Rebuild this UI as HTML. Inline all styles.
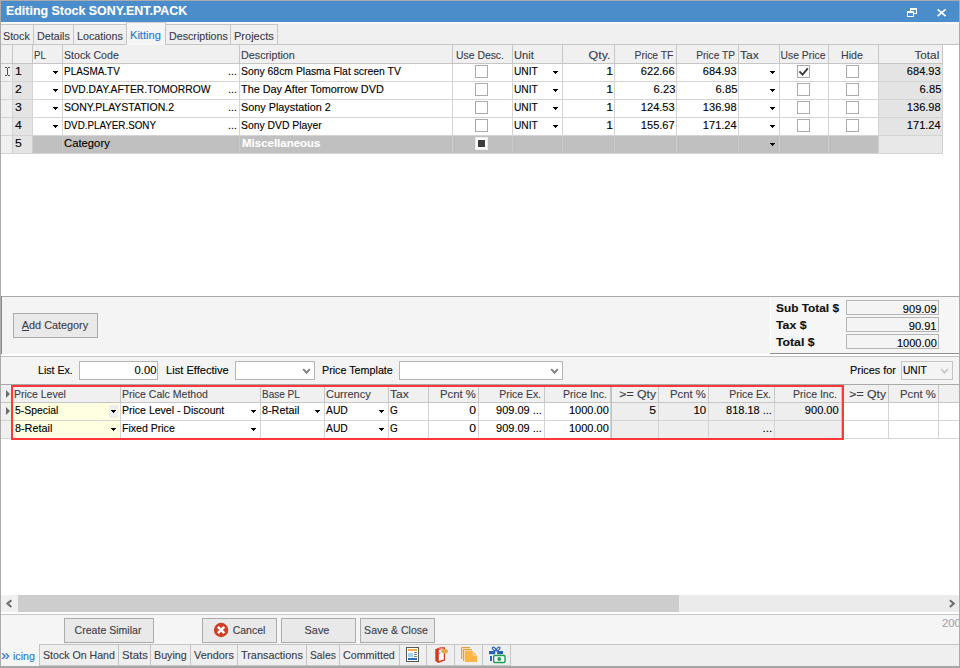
<!DOCTYPE html>
<html><head><meta charset="utf-8"><title>Editing Stock SONY.ENT.PACK</title>
<style>
html,body{margin:0;padding:0;}
body{width:960px;height:668px;position:relative;overflow:hidden;background:#fff;font-family:"Liberation Sans",Arial,sans-serif;font-size:11px;}
#w{position:absolute;left:0;top:0;width:960px;height:668px;overflow:hidden;background:#fff;}
#w div,#w svg{position:absolute;box-sizing:content-box;}
#w .t{white-space:nowrap;height:13px;line-height:13px;-webkit-text-stroke:0.12px;}
#w .l{transform-origin:0 50%;}
#w .r{transform-origin:100% 50%;text-align:right;}
#w .c{transform-origin:50% 50%;text-align:center;width:200px;}
#w .b{font-weight:bold;}
</style></head><body><div id="w">

<div style="left:1px;top:1px;width:958px;height:21px;background:#4b8ccb;"></div>
<div class="t l b" style="top:4px;left:5.6px;color:#fff;font-size:12px;height:14px;line-height:14px;transform:scaleX(1.035);">Editing Stock SONY.ENT.PACK</div>
<svg style="left:906px;top:7px" width="12" height="11" viewBox="0 0 12 11" shape-rendering="crispEdges"><path d="M4 1H11V7H8V6H10V3H5V4H4Z" fill="#fff"/><path d="M1 4H8V10H1ZM2 6V9H7V6Z" fill="#fff" fill-rule="evenodd"/></svg>
<svg style="left:936px;top:8px" width="11" height="10" viewBox="0 0 11 10"><path d="M1.6 1.4L9.6 8.1M9.6 1.4L1.6 8.1" stroke="#fff" stroke-width="1.8" fill="none"/></svg>
<div style="left:1px;top:22px;width:958px;height:23px;background:#f0f0f0;"></div>
<div style="left:1px;top:22px;width:958px;height:2px;background:#f9f7f5;"></div>
<div style="left:1px;top:44px;width:958px;height:1px;background:#c4c4c4;"></div>
<div style="left:1px;top:24px;width:33px;height:1px;background:#c6c6c6;"></div>
<div style="left:33px;top:24px;width:1px;height:20px;background:#c6c6c6;"></div>
<div class="t l" style="top:30px;left:3px;color:#3b3b4a;transform:scaleX(0.974);">Stock</div>
<div style="left:33px;top:24px;width:41px;height:1px;background:#c6c6c6;"></div>
<div style="left:73px;top:24px;width:1px;height:20px;background:#c6c6c6;"></div>
<div class="t l" style="top:30px;left:36.5px;color:#3b3b4a;transform:scaleX(0.975);">Details</div>
<div style="left:73px;top:24px;width:54px;height:1px;background:#c6c6c6;"></div>
<div style="left:126px;top:24px;width:1px;height:20px;background:#c6c6c6;"></div>
<div class="t l" style="top:30px;left:76.5px;color:#3b3b4a;transform:scaleX(0.973);">Locations</div>
<div style="left:127px;top:22px;width:38px;height:23px;background:#f5f5f5;"></div>
<div style="left:126px;top:22px;width:1px;height:23px;background:#c6c6c6;"></div>
<div style="left:165px;top:22px;width:1px;height:23px;background:#c6c6c6;"></div>
<div style="left:126px;top:22px;width:40px;height:1px;background:#d2d2d2;"></div>
<div class="t l" style="top:29px;left:129.5px;color:#2278d0;transform:scaleX(1.007);">Kitting</div>
<div style="left:165px;top:24px;width:66px;height:1px;background:#c6c6c6;"></div>
<div style="left:230px;top:24px;width:1px;height:20px;background:#c6c6c6;"></div>
<div class="t l" style="top:30px;left:168.5px;color:#3b3b4a;transform:scaleX(0.971);">Descriptions</div>
<div style="left:230px;top:24px;width:48px;height:1px;background:#c6c6c6;"></div>
<div style="left:277px;top:24px;width:1px;height:20px;background:#c6c6c6;"></div>
<div class="t l" style="top:30px;left:233.5px;color:#3b3b4a;transform:scaleX(1.001);">Projects</div>
<div style="left:1px;top:45px;width:942px;height:18px;background:#f0f0f0;"></div>
<div style="left:1px;top:63px;width:942px;height:1px;background:#c6c6c6;"></div>
<div style="left:12px;top:45px;width:1px;height:18px;background:#c6c6c6;"></div>
<div style="left:32px;top:45px;width:1px;height:18px;background:#c6c6c6;"></div>
<div style="left:62px;top:45px;width:1px;height:18px;background:#c6c6c6;"></div>
<div class="t l" style="top:49px;left:34px;color:#3c3c48;transform:scaleX(0.876);">PL</div>
<div style="left:239px;top:45px;width:1px;height:18px;background:#c6c6c6;"></div>
<div class="t l" style="top:49px;left:64px;color:#3c3c48;transform:scaleX(0.964);">Stock Code</div>
<div style="left:452px;top:45px;width:1px;height:18px;background:#c6c6c6;"></div>
<div class="t l" style="top:49px;left:241px;color:#3c3c48;transform:scaleX(0.978);">Description</div>
<div style="left:512px;top:45px;width:1px;height:18px;background:#c6c6c6;"></div>
<div class="t c" style="top:49px;left:380.3px;color:#3c3c48;transform:scaleX(0.942);">Use Desc.</div>
<div style="left:562px;top:45px;width:1px;height:18px;background:#c6c6c6;"></div>
<div class="t l" style="top:49px;left:514px;color:#3c3c48;transform:scaleX(1.012);">Unit</div>
<div style="left:614px;top:45px;width:1px;height:18px;background:#c6c6c6;"></div>
<div class="t r" style="top:49px;right:349.5px;color:#3c3c48;transform:scaleX(1.126);">Qty.</div>
<div style="left:676px;top:45px;width:1px;height:18px;background:#c6c6c6;"></div>
<div class="t r" style="top:49px;right:286.70000000000005px;color:#3c3c48;transform:scaleX(0.938);">Price TF</div>
<div style="left:738px;top:45px;width:1px;height:18px;background:#c6c6c6;"></div>
<div class="t r" style="top:49px;right:224.70000000000005px;color:#3c3c48;transform:scaleX(0.924);">Price TP</div>
<div style="left:779px;top:45px;width:1px;height:18px;background:#c6c6c6;"></div>
<div class="t l" style="top:49px;left:740px;color:#3c3c48;transform:scaleX(1.098);">Tax</div>
<div style="left:828px;top:45px;width:1px;height:18px;background:#c6c6c6;"></div>
<div class="t c" style="top:49px;left:703.0px;color:#3c3c48;transform:scaleX(0.939);">Use Price</div>
<div style="left:878px;top:45px;width:1px;height:18px;background:#c6c6c6;"></div>
<div class="t c" style="top:49px;left:751.5px;color:#3c3c48;transform:scaleX(0.964);">Hide</div>
<div style="left:942px;top:45px;width:1px;height:18px;background:#c6c6c6;"></div>
<div class="t r" style="top:49px;right:20.700000000000045px;color:#3c3c48;transform:scaleX(1.067);">Total</div>
<div style="left:1px;top:64px;width:11px;height:17px;background:#f0f0f0;"></div>
<div style="left:13px;top:64px;width:19px;height:17px;background:#e4e4e4;"></div>
<div style="left:879px;top:64px;width:63px;height:17px;background:#e4e4e4;"></div>
<div style="left:1px;top:81px;width:942px;height:1px;background:#d4d4d4;"></div>
<div style="left:12px;top:64px;width:1px;height:17px;background:#d4d4d4;"></div>
<div style="left:32px;top:64px;width:1px;height:17px;background:#d4d4d4;"></div>
<div style="left:62px;top:64px;width:1px;height:17px;background:#d4d4d4;"></div>
<div style="left:239px;top:64px;width:1px;height:17px;background:#d4d4d4;"></div>
<div style="left:452px;top:64px;width:1px;height:17px;background:#d4d4d4;"></div>
<div style="left:512px;top:64px;width:1px;height:17px;background:#d4d4d4;"></div>
<div style="left:562px;top:64px;width:1px;height:17px;background:#d4d4d4;"></div>
<div style="left:614px;top:64px;width:1px;height:17px;background:#d4d4d4;"></div>
<div style="left:676px;top:64px;width:1px;height:17px;background:#d4d4d4;"></div>
<div style="left:738px;top:64px;width:1px;height:17px;background:#d4d4d4;"></div>
<div style="left:779px;top:64px;width:1px;height:17px;background:#d4d4d4;"></div>
<div style="left:828px;top:64px;width:1px;height:17px;background:#d4d4d4;"></div>
<div style="left:878px;top:64px;width:1px;height:17px;background:#d4d4d4;"></div>
<div style="left:942px;top:64px;width:1px;height:17px;background:#d4d4d4;"></div>
<div class="t l" style="top:65px;left:14.6px;transform:scaleX(1.11);">1</div>
<svg style="left:53px;top:71px" width="5" height="3" viewBox="0 0 5 3" shape-rendering="crispEdges"><path d="M0 0H5V1H4V2H3V3H2V2H1V1H0Z" fill="#000"/></svg>
<div class="t l" style="top:65px;left:64px;transform:scaleX(0.904);">PLASMA.TV</div>
<div class="t l" style="top:65px;left:227.7px;transform:scaleX(0.981);">...</div>
<div class="t l" style="top:65px;left:241px;transform:scaleX(0.945);">Sony 68cm Plasma Flat screen TV</div>
<div style="left:475px;top:65px;width:11px;height:11px;background:#fff;border:1px solid #ababab;"></div>
<div class="t l" style="top:65px;left:514px;transform:scaleX(0.927);">UNIT</div>
<svg style="left:553px;top:71px" width="5" height="3" viewBox="0 0 5 3" shape-rendering="crispEdges"><path d="M0 0H5V1H4V2H3V3H2V2H1V1H0Z" fill="#000"/></svg>
<div class="t r" style="top:65px;right:347px;transform:scaleX(1.11);">1</div>
<div class="t r" style="top:65px;right:285px;transform:scaleX(1.004);">622.66</div>
<div class="t r" style="top:65px;right:223px;transform:scaleX(1.004);">684.93</div>
<svg style="left:770px;top:71px" width="5" height="3" viewBox="0 0 5 3" shape-rendering="crispEdges"><path d="M0 0H5V1H4V2H3V3H2V2H1V1H0Z" fill="#000"/></svg>
<div style="left:797px;top:65px;width:11px;height:11px;background:#fff;border:1px solid #ababab;"></div>
<svg style="left:797px;top:65px" width="13" height="13" viewBox="0 0 13 13"><path d="M2.4 6.4L5.6 9.6L10.8 3.4" fill="none" stroke="#3a3a3a" stroke-width="1.9"/></svg>
<div style="left:846px;top:65px;width:11px;height:11px;background:#fff;border:1px solid #ababab;"></div>
<div class="t r" style="top:65px;right:19px;transform:scaleX(1.004);">684.93</div>
<div style="left:1px;top:82px;width:11px;height:17px;background:#f0f0f0;"></div>
<div style="left:13px;top:82px;width:19px;height:17px;background:#e4e4e4;"></div>
<div style="left:879px;top:82px;width:63px;height:17px;background:#e4e4e4;"></div>
<div style="left:1px;top:99px;width:942px;height:1px;background:#d4d4d4;"></div>
<div style="left:12px;top:82px;width:1px;height:17px;background:#d4d4d4;"></div>
<div style="left:32px;top:82px;width:1px;height:17px;background:#d4d4d4;"></div>
<div style="left:62px;top:82px;width:1px;height:17px;background:#d4d4d4;"></div>
<div style="left:239px;top:82px;width:1px;height:17px;background:#d4d4d4;"></div>
<div style="left:452px;top:82px;width:1px;height:17px;background:#d4d4d4;"></div>
<div style="left:512px;top:82px;width:1px;height:17px;background:#d4d4d4;"></div>
<div style="left:562px;top:82px;width:1px;height:17px;background:#d4d4d4;"></div>
<div style="left:614px;top:82px;width:1px;height:17px;background:#d4d4d4;"></div>
<div style="left:676px;top:82px;width:1px;height:17px;background:#d4d4d4;"></div>
<div style="left:738px;top:82px;width:1px;height:17px;background:#d4d4d4;"></div>
<div style="left:779px;top:82px;width:1px;height:17px;background:#d4d4d4;"></div>
<div style="left:828px;top:82px;width:1px;height:17px;background:#d4d4d4;"></div>
<div style="left:878px;top:82px;width:1px;height:17px;background:#d4d4d4;"></div>
<div style="left:942px;top:82px;width:1px;height:17px;background:#d4d4d4;"></div>
<div class="t l" style="top:83px;left:14.6px;transform:scaleX(1.11);">2</div>
<svg style="left:53px;top:89px" width="5" height="3" viewBox="0 0 5 3" shape-rendering="crispEdges"><path d="M0 0H5V1H4V2H3V3H2V2H1V1H0Z" fill="#000"/></svg>
<div class="t l" style="top:83px;left:64px;transform:scaleX(0.936);">DVD.DAY.AFTER.TOMORROW</div>
<div class="t l" style="top:83px;left:227.7px;transform:scaleX(0.981);">...</div>
<div class="t l" style="top:83px;left:241px;transform:scaleX(0.987);">The Day After Tomorrow DVD</div>
<div style="left:475px;top:83px;width:11px;height:11px;background:#fff;border:1px solid #ababab;"></div>
<div class="t l" style="top:83px;left:514px;transform:scaleX(0.927);">UNIT</div>
<svg style="left:553px;top:89px" width="5" height="3" viewBox="0 0 5 3" shape-rendering="crispEdges"><path d="M0 0H5V1H4V2H3V3H2V2H1V1H0Z" fill="#000"/></svg>
<div class="t r" style="top:83px;right:347px;transform:scaleX(1.11);">1</div>
<div class="t r" style="top:83px;right:285px;transform:scaleX(1.018);">6.23</div>
<div class="t r" style="top:83px;right:223px;transform:scaleX(1.018);">6.85</div>
<svg style="left:770px;top:89px" width="5" height="3" viewBox="0 0 5 3" shape-rendering="crispEdges"><path d="M0 0H5V1H4V2H3V3H2V2H1V1H0Z" fill="#000"/></svg>
<div style="left:797px;top:83px;width:11px;height:11px;background:#fff;border:1px solid #ababab;"></div>
<div style="left:846px;top:83px;width:11px;height:11px;background:#fff;border:1px solid #ababab;"></div>
<div class="t r" style="top:83px;right:19px;transform:scaleX(1.018);">6.85</div>
<div style="left:1px;top:100px;width:11px;height:17px;background:#f0f0f0;"></div>
<div style="left:13px;top:100px;width:19px;height:17px;background:#e4e4e4;"></div>
<div style="left:879px;top:100px;width:63px;height:17px;background:#e4e4e4;"></div>
<div style="left:1px;top:117px;width:942px;height:1px;background:#d4d4d4;"></div>
<div style="left:12px;top:100px;width:1px;height:17px;background:#d4d4d4;"></div>
<div style="left:32px;top:100px;width:1px;height:17px;background:#d4d4d4;"></div>
<div style="left:62px;top:100px;width:1px;height:17px;background:#d4d4d4;"></div>
<div style="left:239px;top:100px;width:1px;height:17px;background:#d4d4d4;"></div>
<div style="left:452px;top:100px;width:1px;height:17px;background:#d4d4d4;"></div>
<div style="left:512px;top:100px;width:1px;height:17px;background:#d4d4d4;"></div>
<div style="left:562px;top:100px;width:1px;height:17px;background:#d4d4d4;"></div>
<div style="left:614px;top:100px;width:1px;height:17px;background:#d4d4d4;"></div>
<div style="left:676px;top:100px;width:1px;height:17px;background:#d4d4d4;"></div>
<div style="left:738px;top:100px;width:1px;height:17px;background:#d4d4d4;"></div>
<div style="left:779px;top:100px;width:1px;height:17px;background:#d4d4d4;"></div>
<div style="left:828px;top:100px;width:1px;height:17px;background:#d4d4d4;"></div>
<div style="left:878px;top:100px;width:1px;height:17px;background:#d4d4d4;"></div>
<div style="left:942px;top:100px;width:1px;height:17px;background:#d4d4d4;"></div>
<div class="t l" style="top:101px;left:14.6px;transform:scaleX(1.11);">3</div>
<svg style="left:53px;top:107px" width="5" height="3" viewBox="0 0 5 3" shape-rendering="crispEdges"><path d="M0 0H5V1H4V2H3V3H2V2H1V1H0Z" fill="#000"/></svg>
<div class="t l" style="top:101px;left:64px;transform:scaleX(0.954);">SONY.PLAYSTATION.2</div>
<div class="t l" style="top:101px;left:227.7px;transform:scaleX(0.981);">...</div>
<div class="t l" style="top:101px;left:241px;transform:scaleX(0.985);">Sony Playstation 2</div>
<div style="left:475px;top:101px;width:11px;height:11px;background:#fff;border:1px solid #ababab;"></div>
<div class="t l" style="top:101px;left:514px;transform:scaleX(0.927);">UNIT</div>
<svg style="left:553px;top:107px" width="5" height="3" viewBox="0 0 5 3" shape-rendering="crispEdges"><path d="M0 0H5V1H4V2H3V3H2V2H1V1H0Z" fill="#000"/></svg>
<div class="t r" style="top:101px;right:347px;transform:scaleX(1.11);">1</div>
<div class="t r" style="top:101px;right:285px;transform:scaleX(1.004);">124.53</div>
<div class="t r" style="top:101px;right:223px;transform:scaleX(1.004);">136.98</div>
<svg style="left:770px;top:107px" width="5" height="3" viewBox="0 0 5 3" shape-rendering="crispEdges"><path d="M0 0H5V1H4V2H3V3H2V2H1V1H0Z" fill="#000"/></svg>
<div style="left:797px;top:101px;width:11px;height:11px;background:#fff;border:1px solid #ababab;"></div>
<div style="left:846px;top:101px;width:11px;height:11px;background:#fff;border:1px solid #ababab;"></div>
<div class="t r" style="top:101px;right:19px;transform:scaleX(1.004);">136.98</div>
<div style="left:1px;top:118px;width:11px;height:17px;background:#f0f0f0;"></div>
<div style="left:13px;top:118px;width:19px;height:17px;background:#e4e4e4;"></div>
<div style="left:879px;top:118px;width:63px;height:17px;background:#e4e4e4;"></div>
<div style="left:1px;top:135px;width:942px;height:1px;background:#d4d4d4;"></div>
<div style="left:12px;top:118px;width:1px;height:17px;background:#d4d4d4;"></div>
<div style="left:32px;top:118px;width:1px;height:17px;background:#d4d4d4;"></div>
<div style="left:62px;top:118px;width:1px;height:17px;background:#d4d4d4;"></div>
<div style="left:239px;top:118px;width:1px;height:17px;background:#d4d4d4;"></div>
<div style="left:452px;top:118px;width:1px;height:17px;background:#d4d4d4;"></div>
<div style="left:512px;top:118px;width:1px;height:17px;background:#d4d4d4;"></div>
<div style="left:562px;top:118px;width:1px;height:17px;background:#d4d4d4;"></div>
<div style="left:614px;top:118px;width:1px;height:17px;background:#d4d4d4;"></div>
<div style="left:676px;top:118px;width:1px;height:17px;background:#d4d4d4;"></div>
<div style="left:738px;top:118px;width:1px;height:17px;background:#d4d4d4;"></div>
<div style="left:779px;top:118px;width:1px;height:17px;background:#d4d4d4;"></div>
<div style="left:828px;top:118px;width:1px;height:17px;background:#d4d4d4;"></div>
<div style="left:878px;top:118px;width:1px;height:17px;background:#d4d4d4;"></div>
<div style="left:942px;top:118px;width:1px;height:17px;background:#d4d4d4;"></div>
<div class="t l" style="top:119px;left:14.6px;transform:scaleX(1.11);">4</div>
<svg style="left:53px;top:125px" width="5" height="3" viewBox="0 0 5 3" shape-rendering="crispEdges"><path d="M0 0H5V1H4V2H3V3H2V2H1V1H0Z" fill="#000"/></svg>
<div class="t l" style="top:119px;left:64px;transform:scaleX(0.892);">DVD.PLAYER.SONY</div>
<div class="t l" style="top:119px;left:227.7px;transform:scaleX(0.981);">...</div>
<div class="t l" style="top:119px;left:241px;transform:scaleX(0.944);">Sony DVD Player</div>
<div style="left:475px;top:119px;width:11px;height:11px;background:#fff;border:1px solid #ababab;"></div>
<div class="t l" style="top:119px;left:514px;transform:scaleX(0.927);">UNIT</div>
<svg style="left:553px;top:125px" width="5" height="3" viewBox="0 0 5 3" shape-rendering="crispEdges"><path d="M0 0H5V1H4V2H3V3H2V2H1V1H0Z" fill="#000"/></svg>
<div class="t r" style="top:119px;right:347px;transform:scaleX(1.11);">1</div>
<div class="t r" style="top:119px;right:285px;transform:scaleX(1.004);">155.67</div>
<div class="t r" style="top:119px;right:223px;transform:scaleX(1.004);">171.24</div>
<svg style="left:770px;top:125px" width="5" height="3" viewBox="0 0 5 3" shape-rendering="crispEdges"><path d="M0 0H5V1H4V2H3V3H2V2H1V1H0Z" fill="#000"/></svg>
<div style="left:797px;top:119px;width:11px;height:11px;background:#fff;border:1px solid #ababab;"></div>
<div style="left:846px;top:119px;width:11px;height:11px;background:#fff;border:1px solid #ababab;"></div>
<div class="t r" style="top:119px;right:19px;transform:scaleX(1.004);">171.24</div>
<svg style="left:5px;top:67px" width="5" height="9" viewBox="0 0 5 9" shape-rendering="crispEdges"><path d="M0 0.5H2M3 0.5H5M2.5 1V8M0 8.5H2M3 8.5H5" fill="none" stroke="#505050" stroke-width="1"/></svg>
<div style="left:1px;top:136px;width:11px;height:17px;background:#f0f0f0;"></div>
<div style="left:13px;top:136px;width:19px;height:17px;background:#e4e4e4;"></div>
<div style="left:33px;top:136px;width:845px;height:17px;background:#c0c0c0;"></div>
<div style="left:879px;top:136px;width:63px;height:17px;background:#e8e8e8;"></div>
<div style="left:1px;top:153px;width:942px;height:1px;background:#d4d4d4;"></div>
<div style="left:12px;top:136px;width:1px;height:17px;background:#cfcfcf;"></div>
<div style="left:32px;top:136px;width:1px;height:17px;background:#cfcfcf;"></div>
<div style="left:62px;top:136px;width:1px;height:17px;background:#cacaca;"></div>
<div style="left:239px;top:136px;width:1px;height:17px;background:#cacaca;"></div>
<div style="left:452px;top:136px;width:1px;height:17px;background:#cacaca;"></div>
<div style="left:512px;top:136px;width:1px;height:17px;background:#cacaca;"></div>
<div style="left:562px;top:136px;width:1px;height:17px;background:#cacaca;"></div>
<div style="left:614px;top:136px;width:1px;height:17px;background:#cacaca;"></div>
<div style="left:676px;top:136px;width:1px;height:17px;background:#cacaca;"></div>
<div style="left:738px;top:136px;width:1px;height:17px;background:#cacaca;"></div>
<div style="left:779px;top:136px;width:1px;height:17px;background:#cacaca;"></div>
<div style="left:828px;top:136px;width:1px;height:17px;background:#cacaca;"></div>
<div style="left:878px;top:136px;width:1px;height:17px;background:#cfcfcf;"></div>
<div style="left:942px;top:136px;width:1px;height:17px;background:#cfcfcf;"></div>
<div class="t l" style="top:137px;left:14.6px;transform:scaleX(1.11);">5</div>
<div class="t l" style="top:137px;left:64px;transform:scaleX(1.026);">Category</div>
<div class="t l b" style="top:137px;left:242px;color:#ffffff;transform:scaleX(1.044);">Miscellaneous</div>
<div style="left:475px;top:137px;width:11px;height:11px;background:#fff;border:1px solid #ececec;"></div>
<div style="left:478px;top:140px;width:7px;height:7px;background:#3c3c3c;"></div>
<svg style="left:770px;top:143px" width="5" height="3" viewBox="0 0 5 3" shape-rendering="crispEdges"><path d="M0 0H5V1H4V2H3V3H2V2H1V1H0Z" fill="#000"/></svg>
<div style="left:1px;top:296px;width:958px;height:1px;background:#a9a9a9;"></div>
<div style="left:1px;top:297px;width:958px;height:57px;background:#f4f4f4;"></div>
<div style="left:0px;top:296px;width:2px;height:58px;background:#8c8c8c;"></div>
<div style="left:958px;top:296px;width:2px;height:58px;background:#a0a0a0;"></div>
<div style="left:770px;top:297px;width:189px;height:56px;background:#f6f6f6;"></div>
<div style="left:770px;top:297px;width:1px;height:57px;background:#ffffff;"></div>
<div style="left:770px;top:353px;width:189px;height:1px;background:#8e8e8e;"></div>
<div style="left:13px;top:313px;width:83px;height:23px;background:#e9e9e9;border:1px solid #ababab;"></div>
<div class="t c" style="top:319px;left:-45px;color:#3c3c48;transform:scaleX(0.986);"><u>A</u>dd Category</div>
<div class="t l b" style="top:302px;left:776px;color:#111;transform:scaleX(1.077);">Sub Total $</div>
<div style="left:846px;top:300px;width:91px;height:13px;background:#f4f4f4;border:1px solid #b5b5b5;"></div>
<div class="t r" style="top:303px;right:23px;transform:scaleX(1.004);">909.09</div>
<div class="t l b" style="top:319px;left:776px;color:#111;transform:scaleX(1.117);">Tax $</div>
<div style="left:846px;top:317px;width:91px;height:13px;background:#f4f4f4;border:1px solid #b5b5b5;"></div>
<div class="t r" style="top:320px;right:23px;transform:scaleX(1.01);">90.91</div>
<div class="t l b" style="top:336px;left:776px;color:#111;transform:scaleX(1.111);">Total $</div>
<div style="left:846px;top:334px;width:91px;height:13px;background:#f4f4f4;border:1px solid #b5b5b5;"></div>
<div class="t r" style="top:337px;right:23px;transform:scaleX(1.001);">1000.00</div>
<div style="left:1px;top:356px;width:958px;height:1px;background:#c2c2c2;"></div>
<div style="left:1px;top:357px;width:958px;height:27px;background:#f4f4f4;"></div>
<div style="left:1px;top:384px;width:958px;height:1px;background:#a9a9a9;"></div>
<div class="t l" style="top:364px;left:38px;transform:scaleX(0.965);">List Ex.</div>
<div style="left:79px;top:361px;width:77px;height:17px;background:#fff;border:1px solid #b5b5b5;"></div>
<div class="t r" style="top:364px;right:804px;transform:scaleX(1.018);">0.00</div>
<div class="t l" style="top:364px;left:166px;transform:scaleX(1.01);">List Effective</div>
<div style="left:235px;top:361px;width:78px;height:17px;background:#fff;border:1px solid #b5b5b5;"></div>
<svg style="left:302px;top:368px" width="9" height="7" viewBox="0 0 9 7"><path d="M1.2 1L4.5 4.8L7.8 1" fill="none" stroke="#7c7c7c" stroke-width="1.9"/></svg>
<div class="t l" style="top:364px;left:322px;transform:scaleX(0.976);">Price Template</div>
<div style="left:399px;top:361px;width:162px;height:17px;background:#fff;border:1px solid #b5b5b5;"></div>
<svg style="left:550px;top:368px" width="9" height="7" viewBox="0 0 9 7"><path d="M1.2 1L4.5 4.8L7.8 1" fill="none" stroke="#7c7c7c" stroke-width="1.9"/></svg>
<div class="t l" style="top:364px;left:850px;transform:scaleX(0.99);">Prices for</div>
<div style="left:901px;top:361px;width:50px;height:17px;background:#f4f4f4;border:1px solid #c4c4c4;"></div>
<div class="t l" style="top:364px;left:903px;transform:scaleX(0.927);">UNIT</div>
<svg style="left:940px;top:368px" width="9" height="7" viewBox="0 0 9 7"><path d="M1.2 1L4.5 4.8L7.8 1" fill="none" stroke="#c8c8c8" stroke-width="1.9"/></svg>
<div style="left:1px;top:385px;width:958px;height:17px;background:#f0f0f0;"></div>
<div style="left:1px;top:402px;width:958px;height:1px;background:#c6c6c6;"></div>
<div style="left:12px;top:385px;width:1px;height:17px;background:#c6c6c6;"></div>
<div style="left:120px;top:385px;width:1px;height:17px;background:#c6c6c6;"></div>
<div class="t l" style="top:388px;left:14px;color:#3c3c48;transform:scaleX(0.952);">Price Level</div>
<div style="left:260px;top:385px;width:1px;height:17px;background:#c6c6c6;"></div>
<div class="t l" style="top:388px;left:122px;color:#3c3c48;transform:scaleX(0.955);">Price Calc Method</div>
<div style="left:324px;top:385px;width:1px;height:17px;background:#c6c6c6;"></div>
<div class="t l" style="top:388px;left:262px;color:#3c3c48;transform:scaleX(0.909);">Base PL</div>
<div style="left:388px;top:385px;width:1px;height:17px;background:#c6c6c6;"></div>
<div class="t l" style="top:388px;left:326px;color:#3c3c48;transform:scaleX(1.004);">Currency</div>
<div style="left:428px;top:385px;width:1px;height:17px;background:#c6c6c6;"></div>
<div class="t l" style="top:388px;left:390px;color:#3c3c48;transform:scaleX(1.098);">Tax</div>
<div style="left:478px;top:385px;width:1px;height:17px;background:#c6c6c6;"></div>
<div class="t r" style="top:388px;right:484px;color:#3c3c48;transform:scaleX(1.027);">Pcnt %</div>
<div style="left:544px;top:385px;width:1px;height:17px;background:#c6c6c6;"></div>
<div class="t r" style="top:388px;right:419px;color:#3c3c48;transform:scaleX(0.95);">Price Ex.</div>
<div style="left:610px;top:385px;width:1px;height:17px;background:#c6c6c6;"></div>
<div class="t r" style="top:388px;right:353px;color:#3c3c48;transform:scaleX(0.955);">Price Inc.</div>
<div style="left:658px;top:385px;width:1px;height:17px;background:#c6c6c6;"></div>
<div class="t r" style="top:388px;right:304px;color:#3c3c48;transform:scaleX(1.114);">&gt;= Qty</div>
<div style="left:708px;top:385px;width:1px;height:17px;background:#c6c6c6;"></div>
<div class="t r" style="top:388px;right:254px;color:#3c3c48;transform:scaleX(1.027);">Pcnt %</div>
<div style="left:774px;top:385px;width:1px;height:17px;background:#c6c6c6;"></div>
<div class="t r" style="top:388px;right:189px;color:#3c3c48;transform:scaleX(0.95);">Price Ex.</div>
<div style="left:842px;top:385px;width:1px;height:17px;background:#c6c6c6;"></div>
<div class="t r" style="top:388px;right:123px;color:#3c3c48;transform:scaleX(0.955);">Price Inc.</div>
<div style="left:888px;top:385px;width:1px;height:17px;background:#c6c6c6;"></div>
<div class="t r" style="top:388px;right:74px;color:#3c3c48;transform:scaleX(1.114);">&gt;= Qty</div>
<div style="left:938px;top:385px;width:1px;height:17px;background:#c6c6c6;"></div>
<div class="t r" style="top:388px;right:24px;color:#3c3c48;transform:scaleX(1.027);">Pcnt %</div>
<div style="left:1px;top:403px;width:11px;height:17px;background:#f0f0f0;"></div>
<div style="left:13px;top:403px;width:107px;height:17px;background:#ffffe1;"></div>
<div style="left:611px;top:403px;width:231px;height:17px;background:#eeeeee;"></div>
<div style="left:1px;top:420px;width:958px;height:1px;background:#d4d4d4;"></div>
<div style="left:12px;top:403px;width:1px;height:17px;background:#d4d4d4;"></div>
<div style="left:120px;top:403px;width:1px;height:17px;background:#d4d4d4;"></div>
<div style="left:260px;top:403px;width:1px;height:17px;background:#d4d4d4;"></div>
<div style="left:324px;top:403px;width:1px;height:17px;background:#d4d4d4;"></div>
<div style="left:388px;top:403px;width:1px;height:17px;background:#d4d4d4;"></div>
<div style="left:428px;top:403px;width:1px;height:17px;background:#d4d4d4;"></div>
<div style="left:478px;top:403px;width:1px;height:17px;background:#d4d4d4;"></div>
<div style="left:544px;top:403px;width:1px;height:17px;background:#d4d4d4;"></div>
<div style="left:610px;top:403px;width:1px;height:17px;background:#d4d4d4;"></div>
<div style="left:658px;top:403px;width:1px;height:17px;background:#d4d4d4;"></div>
<div style="left:708px;top:403px;width:1px;height:17px;background:#d4d4d4;"></div>
<div style="left:774px;top:403px;width:1px;height:17px;background:#d4d4d4;"></div>
<div style="left:842px;top:403px;width:1px;height:17px;background:#d4d4d4;"></div>
<div style="left:888px;top:403px;width:1px;height:17px;background:#d4d4d4;"></div>
<div style="left:938px;top:403px;width:1px;height:17px;background:#d4d4d4;"></div>
<div class="t l" style="top:404px;left:15px;transform:scaleX(0.944);">5-Special</div>
<div class="t l" style="top:404px;left:122px;transform:scaleX(0.956);">Price Level - Discount</div>
<div class="t l" style="top:404px;left:262px;transform:scaleX(0.984);">8-Retail</div>
<div class="t l" style="top:404px;left:326px;transform:scaleX(0.938);">AUD</div>
<div class="t l" style="top:404px;left:390px;transform:scaleX(0.911);">G</div>
<div class="t r" style="top:404px;right:483.7px;transform:scaleX(1.11);">0</div>
<div class="t r" style="top:404px;right:417.70000000000005px;transform:scaleX(0.998);">909.09 ...</div>
<div class="t r" style="top:404px;right:351.70000000000005px;transform:scaleX(1.001);">1000.00</div>
<div class="t r" style="top:404px;right:303.70000000000005px;transform:scaleX(1.11);">5</div>
<div class="t r" style="top:404px;right:253.70000000000005px;transform:scaleX(1.045);">10</div>
<div class="t r" style="top:404px;right:187.70000000000005px;transform:scaleX(0.998);">818.18 ...</div>
<div class="t r" style="top:404px;right:121.70000000000005px;transform:scaleX(1.004);">900.00</div>
<div style="left:109px;top:405px;width:9px;height:13px;background:#eeeeee;"></div>
<svg style="left:111px;top:410px" width="5" height="3" viewBox="0 0 5 3" shape-rendering="crispEdges"><path d="M0 0H5V1H4V2H3V3H2V2H1V1H0Z" fill="#000"/></svg>
<svg style="left:251px;top:410px" width="5" height="3" viewBox="0 0 5 3" shape-rendering="crispEdges"><path d="M0 0H5V1H4V2H3V3H2V2H1V1H0Z" fill="#000"/></svg>
<svg style="left:315px;top:410px" width="5" height="3" viewBox="0 0 5 3" shape-rendering="crispEdges"><path d="M0 0H5V1H4V2H3V3H2V2H1V1H0Z" fill="#000"/></svg>
<svg style="left:379px;top:410px" width="5" height="3" viewBox="0 0 5 3" shape-rendering="crispEdges"><path d="M0 0H5V1H4V2H3V3H2V2H1V1H0Z" fill="#000"/></svg>
<div style="left:1px;top:421px;width:11px;height:17px;background:#f0f0f0;"></div>
<div style="left:13px;top:421px;width:107px;height:17px;background:#ffffe1;"></div>
<div style="left:611px;top:421px;width:231px;height:17px;background:#eeeeee;"></div>
<div style="left:1px;top:438px;width:958px;height:1px;background:#d4d4d4;"></div>
<div style="left:12px;top:421px;width:1px;height:17px;background:#d4d4d4;"></div>
<div style="left:120px;top:421px;width:1px;height:17px;background:#d4d4d4;"></div>
<div style="left:260px;top:421px;width:1px;height:17px;background:#d4d4d4;"></div>
<div style="left:324px;top:421px;width:1px;height:17px;background:#d4d4d4;"></div>
<div style="left:388px;top:421px;width:1px;height:17px;background:#d4d4d4;"></div>
<div style="left:428px;top:421px;width:1px;height:17px;background:#d4d4d4;"></div>
<div style="left:478px;top:421px;width:1px;height:17px;background:#d4d4d4;"></div>
<div style="left:544px;top:421px;width:1px;height:17px;background:#d4d4d4;"></div>
<div style="left:610px;top:421px;width:1px;height:17px;background:#d4d4d4;"></div>
<div style="left:658px;top:421px;width:1px;height:17px;background:#d4d4d4;"></div>
<div style="left:708px;top:421px;width:1px;height:17px;background:#d4d4d4;"></div>
<div style="left:774px;top:421px;width:1px;height:17px;background:#d4d4d4;"></div>
<div style="left:842px;top:421px;width:1px;height:17px;background:#d4d4d4;"></div>
<div style="left:888px;top:421px;width:1px;height:17px;background:#d4d4d4;"></div>
<div style="left:938px;top:421px;width:1px;height:17px;background:#d4d4d4;"></div>
<div class="t l" style="top:422px;left:15px;transform:scaleX(0.984);">8-Retail</div>
<div class="t l" style="top:422px;left:122px;transform:scaleX(0.959);">Fixed Price</div>
<div class="t l" style="top:422px;left:326px;transform:scaleX(0.938);">AUD</div>
<div class="t l" style="top:422px;left:390px;transform:scaleX(0.911);">G</div>
<div class="t r" style="top:422px;right:483.7px;transform:scaleX(1.11);">0</div>
<div class="t r" style="top:422px;right:417.70000000000005px;transform:scaleX(0.998);">909.09 ...</div>
<div class="t r" style="top:422px;right:351.70000000000005px;transform:scaleX(1.001);">1000.00</div>
<div class="t r" style="top:422px;right:187.70000000000005px;transform:scaleX(1.068);">...</div>
<svg style="left:111px;top:428px" width="5" height="3" viewBox="0 0 5 3" shape-rendering="crispEdges"><path d="M0 0H5V1H4V2H3V3H2V2H1V1H0Z" fill="#000"/></svg>
<svg style="left:251px;top:428px" width="5" height="3" viewBox="0 0 5 3" shape-rendering="crispEdges"><path d="M0 0H5V1H4V2H3V3H2V2H1V1H0Z" fill="#000"/></svg>
<svg style="left:379px;top:428px" width="5" height="3" viewBox="0 0 5 3" shape-rendering="crispEdges"><path d="M0 0H5V1H4V2H3V3H2V2H1V1H0Z" fill="#000"/></svg>
<div style="left:611px;top:385px;width:1px;height:53px;background:#c0c0c0;"></div>
<div style="left:841px;top:387px;width:1px;height:51px;background:#c6c6c6;"></div>
<svg style="left:6px;top:390px" width="4" height="8" viewBox="0 0 4 8"><path d="M0 0L4 4L0 8Z" fill="#6c6c6c"/></svg>
<svg style="left:6px;top:407px" width="4" height="8" viewBox="0 0 4 8"><path d="M0 0L4 4L0 8Z" fill="#6c6c6c"/></svg>
<div style="left:11px;top:385px;width:829px;height:51px;border:2px solid #ff363a;"></div>
<div style="left:1px;top:595px;width:958px;height:17px;background:#ebebeb;"></div>
<div style="left:1px;top:595px;width:17px;height:17px;background:#f0f0f0;"></div>
<div style="left:18px;top:595px;width:661px;height:17px;background:#cdcdcd;"></div>
<svg style="left:5px;top:599px" width="9" height="9" viewBox="0 0 9 9"><path d="M6.4 1.2L2.4 4.6L6.4 8" fill="none" stroke="#6c6c6c" stroke-width="2"/></svg>
<svg style="left:948px;top:599px" width="9" height="9" viewBox="0 0 9 9"><path d="M1.8 1.2L5.8 4.6L1.8 8" fill="none" stroke="#6c6c6c" stroke-width="2"/></svg>
<div style="left:1px;top:614px;width:958px;height:1px;background:#c8c8c8;"></div>
<div style="left:1px;top:615px;width:958px;height:29px;background:#f5f5f5;"></div>
<div style="left:64px;top:618px;width:88px;height:23px;background:#e9e9e9;border:1px solid #ababab;"></div>
<div class="t c" style="top:624px;left:7.5px;color:#3c3c48;transform:scaleX(0.959);">Create Similar</div>
<div style="left:202px;top:618px;width:73px;height:23px;background:#e9e9e9;border:1px solid #ababab;"></div>
<div class="t c" style="top:624px;left:148.7px;color:#3c3c48;transform:scaleX(0.952);">Cancel</div>
<div style="left:281px;top:618px;width:73px;height:23px;background:#e9e9e9;border:1px solid #ababab;"></div>
<div class="t c" style="top:624px;left:217.0px;color:#3c3c48;transform:scaleX(0.989);">Save</div>
<div style="left:360px;top:618px;width:73px;height:23px;background:#e9e9e9;border:1px solid #ababab;"></div>
<div class="t c" style="top:624px;left:296.0px;color:#3c3c48;transform:scaleX(0.957);">Save &amp; Close</div>
<svg style="left:213px;top:622px" width="16" height="16" viewBox="0 0 16 16"><circle cx="8.1" cy="8" r="7.2" fill="#d03f28"/><path d="M4.9 4.8L11.3 11.2M11.3 4.8L4.9 11.2" stroke="#fff" stroke-width="2.5"/></svg>
<div class="t l" style="top:617px;left:942px;color:#a4a4ac;transform:scaleX(1.024);">200</div>
<div style="left:1px;top:644px;width:958px;height:22px;background:#efefef;"></div>
<div style="left:1px;top:644px;width:958px;height:1px;background:#c4c4c4;"></div>
<div style="left:1px;top:644px;width:38px;height:22px;background:#f5f5f5;"></div>
<div class="t l" style="left:0.5px;top:647px;font-size:14px;height:16px;line-height:16px;color:#2a6fc9;transform:scaleX(1.12)">»</div>
<div class="t l" style="top:650px;left:12.5px;color:#2278d0;transform:scaleX(0.964);">icing</div>
<div style="left:39px;top:644px;width:1px;height:22px;background:#c4c4c4;"></div>
<div style="left:39px;top:665px;width:472px;height:1px;background:#c8c8c8;"></div>
<div style="left:118px;top:644px;width:1px;height:22px;background:#c4c4c4;"></div>
<div class="t l" style="top:649px;left:42.6px;color:#3b3b4a;transform:scaleX(0.963);">Stock On Hand</div>
<div style="left:150px;top:644px;width:1px;height:22px;background:#c4c4c4;"></div>
<div class="t l" style="top:649px;left:121.6px;color:#3b3b4a;transform:scaleX(1.029);">Stats</div>
<div style="left:190px;top:644px;width:1px;height:22px;background:#c4c4c4;"></div>
<div class="t l" style="top:649px;left:153.6px;color:#3b3b4a;transform:scaleX(0.975);">Buying</div>
<div style="left:237px;top:644px;width:1px;height:22px;background:#c4c4c4;"></div>
<div class="t l" style="top:649px;left:193.6px;color:#3b3b4a;transform:scaleX(0.986);">Vendors</div>
<div style="left:306px;top:644px;width:1px;height:22px;background:#c4c4c4;"></div>
<div class="t l" style="top:649px;left:240.6px;color:#3b3b4a;transform:scaleX(0.988);">Transactions</div>
<div style="left:339px;top:644px;width:1px;height:22px;background:#c4c4c4;"></div>
<div class="t l" style="top:649px;left:309.6px;color:#3b3b4a;transform:scaleX(0.937);">Sales</div>
<div style="left:399px;top:644px;width:1px;height:22px;background:#c4c4c4;"></div>
<div class="t l" style="top:649px;left:342.6px;color:#3b3b4a;transform:scaleX(0.974);">Committed</div>
<div style="left:426px;top:644px;width:1px;height:22px;background:#c4c4c4;"></div>
<div style="left:454px;top:644px;width:1px;height:22px;background:#c4c4c4;"></div>
<div style="left:482px;top:644px;width:1px;height:22px;background:#c4c4c4;"></div>
<div style="left:510px;top:644px;width:1px;height:22px;background:#c4c4c4;"></div>
<svg style="left:406px;top:647px" width="13" height="15" viewBox="0 0 13 15"><rect x="0.5" y="0.5" width="12" height="14" fill="#fff" stroke="#585858" stroke-width="1"/><rect x="2" y="2" width="9" height="2" fill="#efab48"/><rect x="2" y="6" width="5" height="4" fill="#a3d2f3"/><path d="M8 5.5H11M8 7.5H11M8 9.5H11" stroke="#7a7a7a" stroke-width="1"/><rect x="2" y="11" width="9" height="2" fill="#2b6cbd"/></svg>
<svg style="left:434px;top:646px" width="16" height="18" viewBox="0 0 16 18"><path d="M1.3 3.2L4.2 2L7.2 0.9L11 1.2V14.5L4.2 17L1.3 14.8Z" fill="#cf3a1c"/><path d="M4.8 4L9.8 2.8V13.5L4.8 15Z" fill="#fff"/><path d="M4.9 2.6L8 1.7M6.6 2.9L9.6 2" stroke="#f6d9d2" stroke-width="0.6"/><rect x="7.2" y="2.9" width="6.8" height="4.6" rx="2.2" fill="#e9a751"/><rect x="5.3" y="6.6" width="1" height="1.2" fill="#555"/></svg>
<svg style="left:461px;top:647px" width="17" height="16" viewBox="0 0 17 16"><path d="M0.5 12V0.5H9" fill="none" stroke="#e2a03c" stroke-width="1"/><path d="M2.5 14V2.5H11" fill="none" stroke="#e2a03c" stroke-width="1"/><path d="M4 4H11.5L16 8.5V15H4Z" fill="#fdb548"/><path d="M12.2 4.2V8.3H16" fill="none" stroke="#fde3bb" stroke-width="0.8"/><path d="M1.5 12V1.5H9M3.5 14V3.5H11" fill="none" stroke="#f8d9a6" stroke-width="1"/></svg>
<svg style="left:489px;top:646px" width="17" height="18" viewBox="0 0 17 18"><ellipse cx="5.1" cy="2.9" rx="1.2" ry="2.1" transform="rotate(-42 5.1 2.9)" fill="none" stroke="#2561b9" stroke-width="1.1"/><ellipse cx="9.3" cy="2.9" rx="1.2" ry="2.1" transform="rotate(42 9.3 2.9)" fill="none" stroke="#2561b9" stroke-width="1.1"/><rect x="0" y="5" width="6.2" height="3.2" fill="#2561b9"/><rect x="8.2" y="5" width="5.8" height="3.2" fill="#2561b9"/><rect x="6.4" y="3.8" width="1.6" height="1.6" fill="#2561b9"/><rect x="1" y="10" width="2" height="5" fill="#2561b9"/><rect x="4.7" y="9.5" width="11.3" height="7" rx="1" fill="#fff" stroke="#1e9c50" stroke-width="1.4"/><circle cx="10.2" cy="13" r="1.9" fill="#1e9c50"/></svg>
<div style="left:0px;top:0px;width:960px;height:1px;background:#ababab;"></div>
<div style="left:0px;top:0px;width:1px;height:668px;background:#ababab;"></div>
<div style="left:959px;top:0px;width:1px;height:668px;background:#ababab;"></div>
<div style="left:0px;top:666px;width:960px;height:2px;background:#a6a6a6;"></div>
</div></body></html>
